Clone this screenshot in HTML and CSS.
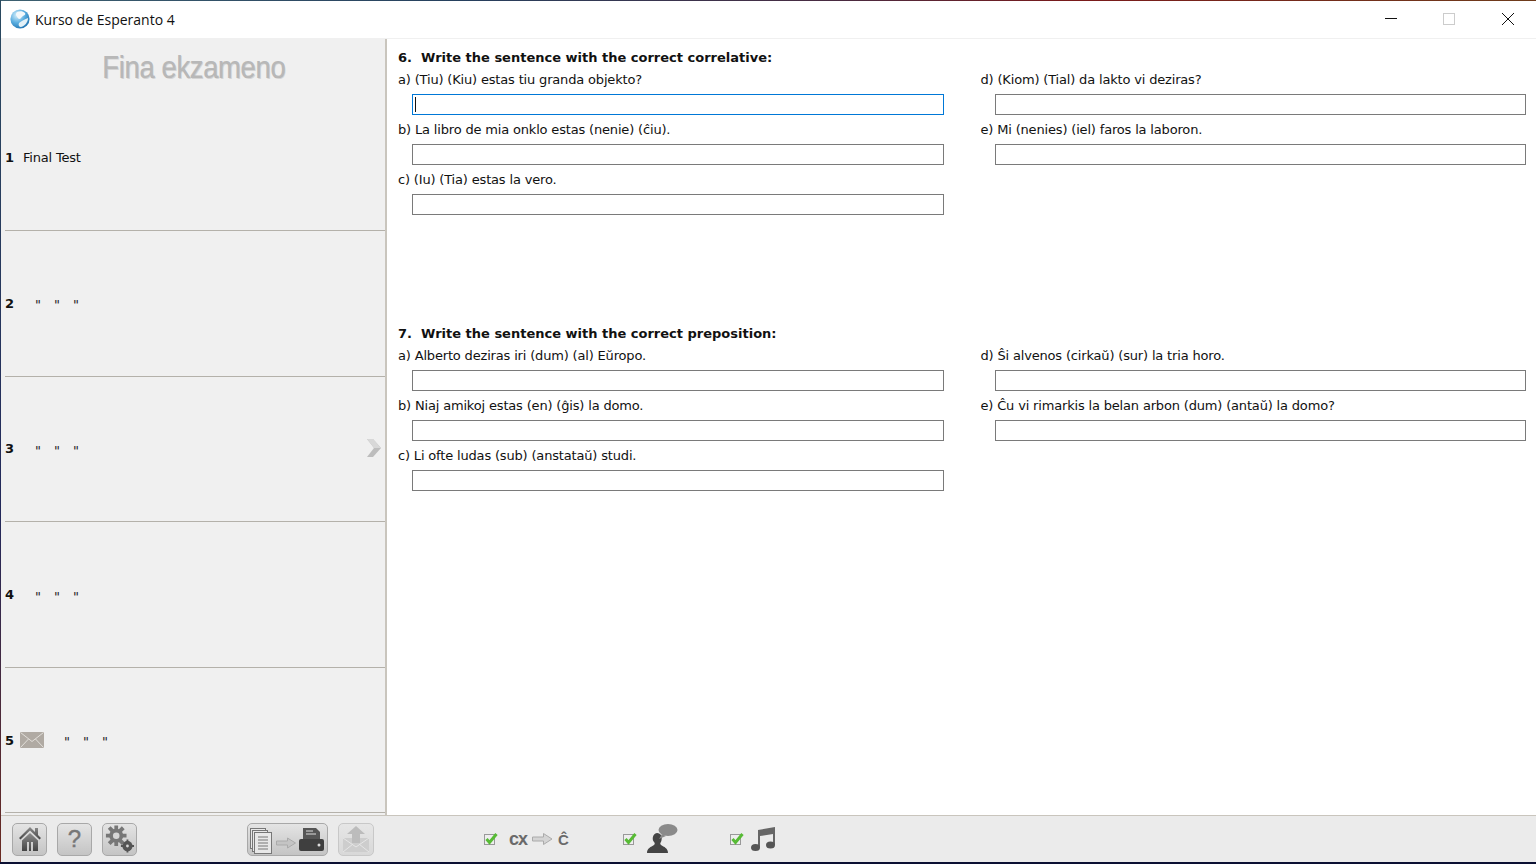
FILE: index.html
```html
<!DOCTYPE html>
<html lang="en">

<head>
    <meta charset="UTF-8">
    <title>Kurso de Esperanto 4</title>
    <link rel="stylesheet" href="styles.css">
</head>

<body>
    <div class="window">
        <div class="titlebar">
            <svg class="globe" width="20" height="20" viewBox="0 0 20 20">
                <defs>
                    <radialGradient id="sea" cx="0.35" cy="0.3" r="0.8">
                        <stop offset="0" stop-color="#d8f0fb" />
                        <stop offset="0.5" stop-color="#5aaee0" />
                        <stop offset="1" stop-color="#1a6cab" />
                    </radialGradient>
                </defs>
                <circle cx="10" cy="10" r="9.6" fill="url(#sea)" />
                <path d="M7 3c3-1.500 6-1 8 1 1 2-1 2-2 3-2 1-2 3-4 3-2-1-2-3-3-4 0-1 0-2 1-3z" fill="#f2f8fb" />
                <path d="M9 14c2-2 5-3 9-5 0 4-3 8-7 9-2 0-3-2-2-4z" fill="#e4f1f7" />
            </svg>
            <span class="title">Kurso de Esperanto 4</span>
            <div class="winbtns">
                <span class="winbtn"><svg width="12" height="12" viewBox="0 0 12 12"><path d="M0 5.500h12" stroke="#111" fill="none" /></svg></span>
                <span class="winbtn"><svg width="12" height="12" viewBox="0 0 12 12"><rect x="0.500" y="0.500" width="11" height="11" stroke="#ccc" fill="none" /></svg></span>
                <span class="winbtn"><svg width="14" height="14" viewBox="-1 0 14 14"><path d="M1 1l12 12M13 1L1 13" stroke="#111" fill="none" /></svg></span>
            </div>
        </div>

        <div class="main">
            <div class="sidebar">
                <h1 class="lesson-title">Fina ekzameno</h1>
                <div class="row"><b>1</b><span class="row-text">Final Test</span></div>
                <div class="row"><b>2</b><span class="marks"><i>"</i><i>"</i><i>"</i></span></div>
                <div class="row"><b>3</b><span class="marks"><i>"</i><i>"</i><i>"</i></span>
                    <svg class="next" width="16" height="18" viewBox="0 0 16 18">
                        <path d="M1 0h6l8 9-8 9H1l7-9z" fill="#bdbdbd" />
                        <path d="M1 0h6l8 9H8z" fill="#d8d8d8" />
                    </svg>
                </div>
                <div class="row"><b>4</b><span class="marks"><i>"</i><i>"</i><i>"</i></span></div>
                <div class="row"><b>5</b>
                    <svg class="mail" width="24" height="16" viewBox="0 0 24 16">
                        <rect width="24" height="16" fill="#b0aaa3" />
                        <path d="M0.500 0.500l11.500 9 11.500-9M0.500 15.500l8-8.500M23.500 15.500l-8-8.500" stroke="#e2dfda" fill="none" />
                    </svg>
                    <span class="marks wide"><i>"</i><i>"</i><i>"</i></span>
                </div>
            </div>

            <div class="content">
                <section class="question">
                    <h2>6.&nbsp; Write the sentence with the correct correlative:</h2>
                    <div class="answers">
                        <div class="answer"><label>a) (Tiu) (Kiu) estas tiu granda objekto?</label><input class="active" type="text"></div>
                        <div class="answer"><label>d) (Kiom) (Tial) da lakto vi deziras?</label><input type="text"></div>
                        <div class="answer"><label>b) La libro de mia onklo estas (nenie) (ĉiu).</label><input type="text"></div>
                        <div class="answer"><label>e) Mi (nenies) (iel) faros la laboron.</label><input type="text"></div>
                        <div class="answer"><label>c) (Iu) (Tia) estas la vero.</label><input type="text"></div>
                    </div>
                </section>
                <section class="question">
                    <h2>7.&nbsp; Write the sentence with the correct preposition:</h2>
                    <div class="answers">
                        <div class="answer"><label>a) Alberto deziras iri (dum) (al) Eŭropo.</label><input type="text"></div>
                        <div class="answer"><label>d) Ŝi alvenos (cirkaŭ) (sur) la tria horo.</label><input type="text"></div>
                        <div class="answer"><label>b) Niaj amikoj estas (en) (ĝis) la domo.</label><input type="text"></div>
                        <div class="answer"><label>e) Ĉu vi rimarkis la belan arbon (dum) (antaŭ) la domo?</label><input type="text"></div>
                        <div class="answer"><label>c) Li ofte ludas (sub) (anstataŭ) studi.</label><input type="text"></div>
                    </div>
                </section>
            </div>
        </div>

        <div class="footer">
            <div class="tools">
                <button class="tool">
                    <svg width="22" height="24" viewBox="0 0 22 24">
                        <defs>
                            <linearGradient id="dark" x1="0" y1="0" x2="0" y2="1">
                                <stop offset="0" stop-color="#8c8c8c" />
                                <stop offset="1" stop-color="#444" />
                            </linearGradient>
                        </defs>
                        <path d="M11 0L0 11l1.500 1.500L11 3.500l9.500 9L22 11l-3-3V1h-3v4z" fill="url(#dark)" />
                        <path d="M3 13.500L11 6l8 7.500V24h-5v-9h-2v9h-2v-9H8v9H3z" fill="url(#dark)" />
                    </svg>
                </button>
                <button class="tool help">?</button>
                <button class="tool">
                    <svg width="29" height="28" viewBox="0 0 31 29">
                        <g fill="#777">
                            <circle cx="12" cy="11" r="7.500" />
                            <path d="M10 0h4v5h-4zM10 17h4v5h-4zM1 9h5v4H1zM18 9h5v4h-5zM3 3.500L6 1l4 4-3 3zM14 17l3-3 4 4-3 3zM3 18l4-4 3 3-4 4zM14 5l4-4 3 3-4 4z" />
                        </g>
                        <g fill="#555">
                            <circle cx="24" cy="22" r="5.500" />
                            <path d="M23 15h2v3h-2zM23 26h2v3h-2zM17 21h3v2h-3zM28 21h3v2h-3z" />
                        </g>
                        <circle cx="12" cy="11" r="3.500" fill="#d6d6d6" />
                        <circle cx="24" cy="22" r="1.500" fill="#d6d6d6" />
                    </svg>
                </button>
                <button class="tool print">
                    <svg width="79" height="31" viewBox="0 0 79 31">
                        <g fill="#e8e8e8" stroke="#777">
                            <rect x="2.500" y="4.500" width="15" height="20" />
                            <rect x="4.500" y="6.500" width="15" height="21" />
                            <rect x="6.500" y="8.500" width="17" height="21" />
                        </g>
                        <path d="M10 13h10M10 16h10M10 19h10M10 22h10M10 25h10" stroke="#777" />
                        <path d="M28.500 17h11v-3l8 5-8 5v-3h-11z" fill="#c4c4c4" stroke="#aaa" />
                        <path d="M55 4h13l4 4v7H55z" fill="#555" />
                        <path d="M58 7h7M58 10h10" stroke="#ddd" />
                        <rect x="51" y="15" width="25" height="12" rx="2" fill="#3f3f3f" />
                        <circle cx="71" cy="21" r="1.500" fill="#ddd" />
                    </svg>
                </button>
                <button class="tool upload">
                    <svg width="28" height="28" viewBox="0 0 28 28">
                        <path d="M1 13h26v14H1z" fill="#cdcdcd" />
                        <path d="M1 13l13 9 13-9M1 27l10-8M27 27l-10-8" stroke="#e6e6e6" fill="none" />
                        <path d="M14 1l9 8h-5v9h-8V9H5z" fill="#bcbcbc" />
                    </svg>
                </button>
            </div>

            <div class="option keys">
                <svg class="check" width="14" height="14" viewBox="0 0 14 14"><rect x="0.500" y="2.500" width="10" height="10" fill="#eee" stroke="#999" /><path d="M2.500 7l3 3.500L12.500 2" stroke="#57bb35" stroke-width="3" fill="none" /></svg>
                <span class="cx">cx</span>
                <svg class="key-arrow" width="21" height="12" viewBox="0 0 21 12"><path d="M0.500 4h11V0.500L20 6l-8.500 5.500V8h-11z" fill="#d4d4d4" stroke="#aaa" /></svg>
                <span class="cx cap">Ĉ</span>
            </div>
            <div class="option voice">
                <svg class="check" width="14" height="14" viewBox="0 0 14 14"><rect x="0.500" y="2.500" width="10" height="10" fill="#eee" stroke="#999" /><path d="M2.500 7l3 3.500L12.500 2" stroke="#57bb35" stroke-width="3" fill="none" /></svg>
                <svg width="31" height="30" viewBox="0 0 31 30">
                    <path d="M0 29c0-5 4-6 7-8 1-1 1-2 0-3-2-2-2-8 3-9 4 0 6 4 4 9-1 1-1 2 0 3 3 2 7 3 7 8z" fill="#444" />
                    <ellipse cx="21" cy="6" rx="9.500" ry="6" fill="#8a8a8a" />
                    <path d="M15 10l-3 5 7-3z" fill="#8a8a8a" />
                </svg>
            </div>
            <div class="option music">
                <svg class="check" width="14" height="14" viewBox="0 0 14 14"><rect x="0.500" y="2.500" width="10" height="10" fill="#eee" stroke="#999" /><path d="M2.500 7l3 3.500L12.500 2" stroke="#57bb35" stroke-width="3" fill="none" /></svg>
                <svg width="25" height="24" viewBox="0 0 25 24">
                    <path d="M7 3L24 0v18h-2V7L9 9v12H7z" fill="#666" />
                    <ellipse cx="4.500" cy="20.500" rx="4.500" ry="3.500" fill="#555" />
                    <ellipse cx="19.500" cy="18" rx="4.500" ry="3.500" fill="#555" />
                </svg>
            </div>
        </div>
    </div>
</body>

</html>
```

FILE: styles.css
```css
html,
body {
    margin: 0;
    height: 100%;
}

body {
    overflow: hidden;
    background:
        linear-gradient(#0b1033, #0b1033) bottom / 100% 2px no-repeat,
        linear-gradient(#2a4a60, #23285a 60%, #6b2a20) left / 1px 100% no-repeat,
        linear-gradient(to right, #3d6070, #26405e 30%, #4a2a40 55%, #7a1a1a 70%, #6e3c1c);
    font-family: "DejaVu Sans", sans-serif;
    font-size: 13px;
    color: #111;
}

.window {
    box-sizing: border-box;
    height: 861px;
    margin: 1px 0 0 1px;
    display: flex;
    flex-direction: column;
    background-color: #fff;
}

.titlebar {
    height: 38px;
    flex: none;
    box-sizing: border-box;
    display: flex;
    align-items: center;
    padding: 0 0 1px 9px;
    background-color: #fff;
    border-bottom: 1px solid #f0f0f0;
}

.globe {
    margin-right: 5px;
}

.title {
    font-family: "Open Sans", sans-serif;
    font-size: 14px;
    color: #111;
}

.winbtns {
    margin-left: auto;
    display: flex;
}

.winbtn {
    width: 58px;
    height: 36px;
    display: flex;
    align-items: center;
    justify-content: center;
}

.main {
    flex: 1;
    min-height: 0;
    display: flex;
}

.sidebar {
    width: 386px;
    flex: none;
    display: flex;
    flex-direction: column;
    padding-left: 4px;
    box-sizing: border-box;
    background-color: #f0f0f0;
    border-right: 2px solid #c9c5bd;
}

.lesson-title {
    height: 46.5px;
    flex: none;
    margin: 0;
    padding-top: 11px;
    box-sizing: border-box;
    text-align: center;
    font-family: "Liberation Sans", sans-serif;
    font-size: 31px;
    font-weight: normal;
    letter-spacing: -0.4px;
    line-height: 36px;
    color: #b8b8b8;
    text-shadow: 1px 1px 0 #d4d4d4;
    -webkit-text-stroke: 0.2px #aaa;
    transform: scaleX(0.885);
    transform-origin: 180px 0;
}

.row {
    height: 145.6px;
    flex: none;
    box-sizing: border-box;
    position: relative;
    display: flex;
    align-items: center;
    border-bottom: 1px solid #b4b1aa;
}

.row b {
    width: 18px;
    flex: none;
}

.row-text {
    letter-spacing: -0.2px;
}

.marks {
    display: flex;
    padding: 3px 0 0 12px;
}

.marks i {
    width: 19px;
    font-size: 13px;
    line-height: 13px;
    color: #222;
}

.marks.wide {
    padding-left: 20px;
}

.next {
    position: absolute;
    right: 3px;
    top: 62px;
}

.mail {
    margin-left: -3px;
}

.content {
    flex: 1;
    padding: 8px 10px 0 11px;
}

.question {
    height: 276px;
}

h2 {
    margin: 0;
    font-size: 13px;
    line-height: 22px;
}

.answers {
    display: grid;
    grid-template-columns: 1fr 1fr;
    column-gap: 37px;
}

.answer label {
    display: block;
    line-height: 21px;
    margin-bottom: 4px;
    letter-spacing: -0.17px;
}

.answer input {
    display: block;
    box-sizing: border-box;
    width: calc(100% - 14px);
    height: 21px;
    margin: 0 0 4px 14px;
    border: 1px solid #7a7a7a;
    border-radius: 0;
    padding: 0;
    outline: none;
    background-color: #fff;
}

.answer input.active {
    border-color: #0078d7;
    background:
        linear-gradient(#111, #111) 2px 2px / 1px 15px no-repeat,
        #fff;
}

.footer {
    height: 47px;
    flex: none;
    display: flex;
    align-items: center;
    background-color: #ebebeb;
    border-top: 1px solid #c9c5bd;
    box-sizing: border-box;
    padding: 0 0 0 11px;
}

.tools {
    display: flex;
    gap: 10px;
    width: 472px;
    flex: none;
}

.tool {
    width: 35px;
    height: 33px;
    padding: 0;
    display: flex;
    align-items: center;
    justify-content: center;
    border: 1px solid #a8a8a8;
    border-radius: 5px;
    background: linear-gradient(#e4e4e4, #c4c4c4);
}

.help {
    font-family: "Liberation Sans", sans-serif;
    font-size: 24px;
    color: #777;
    -webkit-text-stroke: 0.4px #777;
}

.print {
    width: 81px;
    margin-left: 100px;
}

.upload {
    width: 36px;
    background: linear-gradient(#e6e6e6, #d8d8d8);
    border-color: #c8c8c8;
}

.option {
    display: flex;
    align-items: center;
}

.check {
    margin-right: 10px;
}

.keys {
    width: 139px;
    flex: none;
}

.keys .check {
    margin-right: 11px;
}

.cx {
    font-family: "Liberation Sans", sans-serif;
    font-size: 18px;
    font-weight: bold;
    letter-spacing: -1px;
    color: #6a6a6a;
}

.cx.cap {
    font-size: 15px;
    letter-spacing: 0;
}

.key-arrow {
    margin: 0 5px;
}

.voice {
    width: 107px;
    flex: none;
}

.music .check {
    margin-right: 7px;
}
```
